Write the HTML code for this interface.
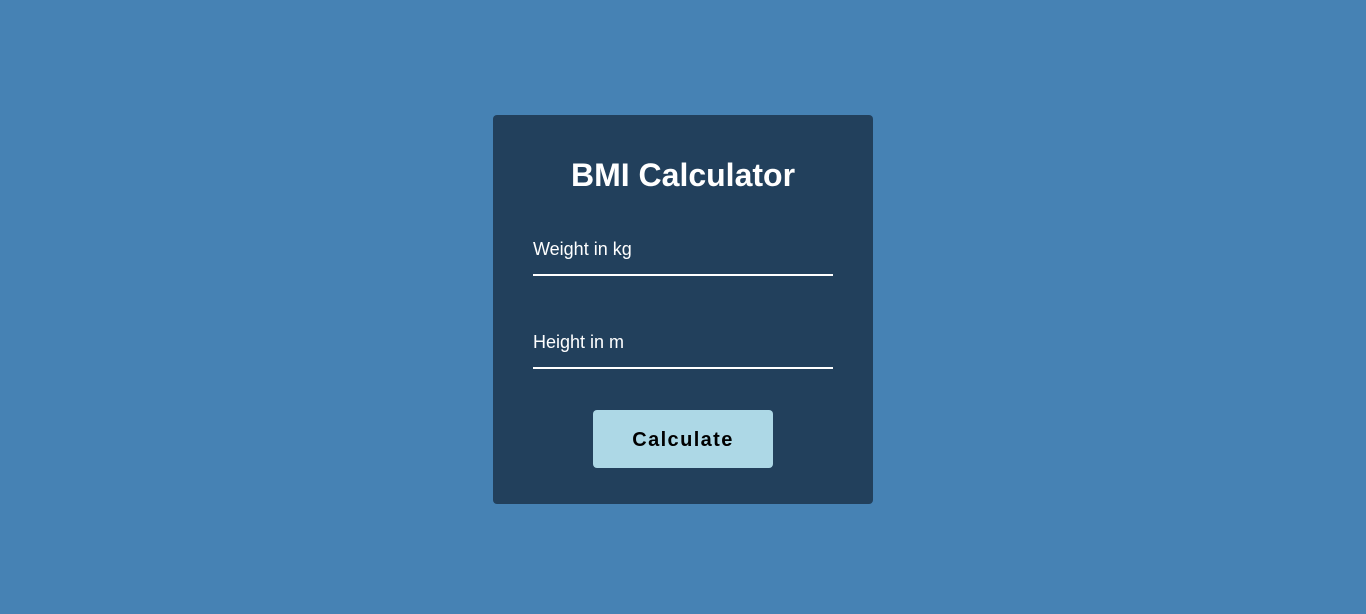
<!DOCTYPE html>
<html><head><style>
html,body{margin:0;padding:0;width:1366px;height:614px;background:#4682b4;font-family:"Liberation Sans",Arial,sans-serif;overflow:hidden}
.card{position:absolute;left:493px;top:115px;width:380px;height:389px;background:#22405c;border-radius:4px}
h1{position:absolute;left:0;width:380px;top:41px;margin:0;text-align:center;color:#fff;font-size:32px;font-weight:bold;line-height:38px}
.lbl{position:absolute;left:40px;color:#fff;font-size:18px;line-height:20px}
.line{position:absolute;left:40px;width:300px;height:2px;background:#fff}
.btn{position:absolute;left:100px;top:295px;width:180px;height:58px;background:#add8e6;border-radius:4px;text-align:center;line-height:60px;font-weight:bold;font-size:20px;letter-spacing:1.4px;color:#000}
</style></head><body>
<div class="card">
<h1>BMI Calculator</h1>
<div class="lbl" style="top:124px">Weight in kg</div>
<div class="line" style="top:159px"></div>
<div class="lbl" style="top:217px">Height in m</div>
<div class="line" style="top:252px"></div>
<div class="btn">Calculate</div>
</div>
</body></html>
